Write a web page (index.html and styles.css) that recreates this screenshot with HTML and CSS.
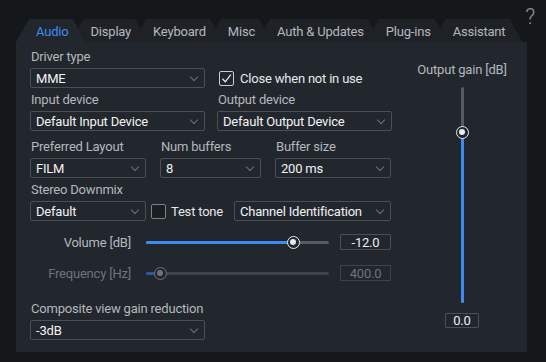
FILE: index.html
```html
<!DOCTYPE html>
<html lang="en">
<head>
    <meta charset="UTF-8">
    <title>Preferences - Audio</title>
    <link rel="stylesheet" href="styles.css">
</head>
<body>
    <div class="help">?</div>

    <!-- Tab bar -->
    <div class="tabs">
        <div class="tab active">Audio</div>
        <div class="tab">Display</div>
        <div class="tab">Keyboard</div>
        <div class="tab">Misc</div>
        <div class="tab">Auth &amp; Updates</div>
        <div class="tab">Plug-ins</div>
        <div class="tab">Assistant</div>
    </div>

    <div class="panel">
        <div class="left-col">
            <!-- Driver -->
            <div class="field">
                <label>Driver type</label>
                <div class="row">
                    <div class="select w-wide">MME</div>
                    <div class="check checked">
                        <span class="box"><svg width="13" height="13" viewBox="0 0 13 13"><path d="M2.5 6.8 L5.3 9.8 L10.8 2.6" fill="none" stroke="#e8eaec" stroke-width="1.3"/></svg></span>
                        Close when not in use
                    </div>
                </div>
            </div>

            <!-- Devices -->
            <div class="field-row gap-12">
                <div class="field">
                    <label>Input device</label>
                    <div class="select w-wide">Default Input Device</div>
                </div>
                <div class="field">
                    <label>Output device</label>
                    <div class="select w-wide">Default Output Device</div>
                </div>
            </div>

            <!-- Layout / buffers -->
            <div class="field-row gap-14 spaced">
                <div class="field">
                    <label>Preferred Layout</label>
                    <div class="select w-mid">FILM</div>
                </div>
                <div class="field">
                    <label>Num buffers</label>
                    <div class="select w-small">8</div>
                </div>
                <div class="field">
                    <label>Buffer size</label>
                    <div class="select w-mid">200 ms</div>
                </div>
            </div>

            <!-- Downmix -->
            <div class="field">
                <label>Stereo Downmix</label>
                <div class="row">
                    <div class="select w-mid">Default</div>
                    <div class="check tone">
                        <span class="box"></span>
                        Test tone
                    </div>
                    <div class="select w-chan">Channel Identification</div>
                </div>
            </div>

            <!-- Sliders -->
            <div class="slider-row volume">
                <span class="slider-label">Volume [dB]</span>
                <div class="hslider">
                    <div class="fill" style="width: 147px"></div>
                    <div class="thumb" style="left: 147px"></div>
                </div>
                <div class="value">-12.0</div>
            </div>
            <div class="slider-row disabled">
                <span class="slider-label">Frequency [Hz]</span>
                <div class="hslider">
                    <div class="fill" style="width: 14px"></div>
                    <div class="thumb" style="left: 14px"></div>
                </div>
                <div class="value">400.0</div>
            </div>

            <!-- Composite -->
            <div class="field composite">
                <label>Composite view gain reduction</label>
                <div class="select w-wide">-3dB</div>
            </div>
        </div>

        <!-- Output gain -->
        <div class="right-col">
            <label class="gain-label">Output gain [dB]</label>
            <div class="vslider">
                <div class="vfill" style="top: 45px"></div>
                <div class="thumb" style="top: 45px"></div>
            </div>
            <div class="value small">0.0</div>
        </div>
    </div>
</body>
</html>
```

FILE: styles.css
```css
* {
    box-sizing: border-box;
}

body {
    margin: 0;
    padding: 19px 19px 0 16px;
    background: #15181b;
    font-family: 'Roboto', 'Noto Sans', sans-serif;
    font-size: 13px;
    letter-spacing: -0.2px;
    color: #b4b8bd;
    position: relative;
    height: 362px;
    overflow: hidden;
}

.help {
    position: absolute;
    top: 4px;
    right: 11px;
    font-size: 22px;
    font-weight: 300;
    color: #8d9298;
}

/* Tabs */
.tabs {
    display: flex;
    height: 23px;
}

.tab {
    height: 23px;
    line-height: 25px;
    padding: 0 17px 0 20px;
    margin-right: -15px;
    background: #1e2227;
    color: #b4b8bd;
    clip-path: polygon(0 100%, 13px 0, calc(100% - 13px) 0, 100% 100%);
    white-space: nowrap;
}

.tab.active {
    background: #22262d;
    color: #3d8bf2;
    z-index: 2;
}

/* Panel */
.panel {
    display: flex;
    width: 511px;
    height: 310px;
    background: #22262d;
    padding: 6px 0 0 14px;
}

.left-col {
    width: 361px;
    display: flex;
    flex-direction: column;
}

.field {
    display: flex;
    flex-direction: column;
}

.field label {
    height: 17px;
    line-height: 17px;
    margin-bottom: 3px;
    padding-left: 1px;
}

.left-col > * + * {
    margin-top: 3px;
}

.field-row {
    display: flex;
}

.left-col > .field-row.spaced {
    margin-top: 7px;
}

.gap-12 { gap: 12px; }
.gap-14 { gap: 14px; }

.row {
    display: flex;
    align-items: center;
}

.select {
    position: relative;
    flex-shrink: 0;
    height: 20px;
    line-height: 19px;
    border: 1px solid #4b5058;
    border-radius: 2px;
    padding-left: 5px;
    color: #f2f3f4;
    white-space: nowrap;
}

.select::after {
    content: '';
    position: absolute;
    right: 7px;
    top: 5px;
    width: 5px;
    height: 5px;
    border-right: 1.3px solid #6e737a;
    border-bottom: 1.3px solid #6e737a;
    transform: rotate(45deg);
}

.w-wide { width: 175px; }
.w-mid { width: 116px; }
.w-small { width: 101px; }
.w-chan { width: 157px; }

/* Checkboxes */
.check {
    display: flex;
    align-items: center;
    gap: 6px;
    color: #e6e8ea;
    margin-left: 14px;
    white-space: nowrap;
}

.check .box {
    flex-shrink: 0;
    width: 15px;
    height: 15px;
    border: 1px solid #c9cdd1;
    border-radius: 2px;
    display: flex;
    align-items: center;
    justify-content: center;
}

.check.tone {
    margin-left: 5px;
    margin-right: auto;
    gap: 5px;
}

.check.tone .box {
    border-color: #7d8289;
    background: #1a1d22;
}

/* Horizontal sliders */
.slider-row {
    display: flex;
    align-items: center;
    height: 20px;
}

.left-col > .slider-row {
    margin-top: 11px;
}

.slider-row.disabled {
    color: #6f747b;
}

.slider-label {
    width: 101px;
    text-align: right;
}

.hslider {
    position: relative;
    width: 183px;
    height: 3px;
    margin-left: 15px;
    background: #575c63;
    border-radius: 2px;
}

.fill {
    height: 3px;
    background: #3d8bf2;
    border-radius: 2px;
}

.thumb {
    position: absolute;
    top: 50%;
    width: 13px;
    height: 13px;
    margin: -6.5px 0 0 -6.5px;
    border: 1.5px solid #e9ebed;
    border-radius: 50%;
    background: #22262d;
}

.thumb::after {
    content: '';
    position: absolute;
    left: 2px;
    top: 2px;
    width: 6px;
    height: 6px;
    border-radius: 50%;
    background: #e9ebed;
}

.disabled .fill {
    background: #2d5a96;
}

.disabled .hslider {
    background: #3f444b;
}

.disabled .thumb {
    border-color: #6f747b;
}

.disabled .thumb::after {
    background: #6f747b;
}

.value {
    width: 51px;
    height: 16px;
    line-height: 15px;
    margin-left: 11px;
    border: 1px solid #4b5058;
    border-radius: 1px;
    text-align: center;
    color: #eceef0;
}

.disabled .value {
    color: #6f747b;
    border-color: #3e434a;
}

.left-col > .composite {
    margin-top: 17px;
}

/* Right column: output gain */
.right-col {
    flex: 1;
    padding: 13px 0 0 6px;
    display: flex;
    flex-direction: column;
    align-items: center;
}

.gain-label {
    height: 17px;
    line-height: 17px;
}

.vslider {
    position: relative;
    width: 3px;
    height: 216px;
    margin-top: 9px;
    background: #575c63;
    border-radius: 2px;
}

.vfill {
    position: absolute;
    left: 0;
    bottom: 0;
    width: 3px;
    background: #3d8bf2;
    border-radius: 2px;
}

.vslider .thumb {
    left: 50%;
    top: 0;
    margin: -6.5px 0 0 -6.5px;
}

.value.small {
    width: 34px;
    height: 15px;
    line-height: 14px;
    margin: 10px 0 0 0;
}
```
